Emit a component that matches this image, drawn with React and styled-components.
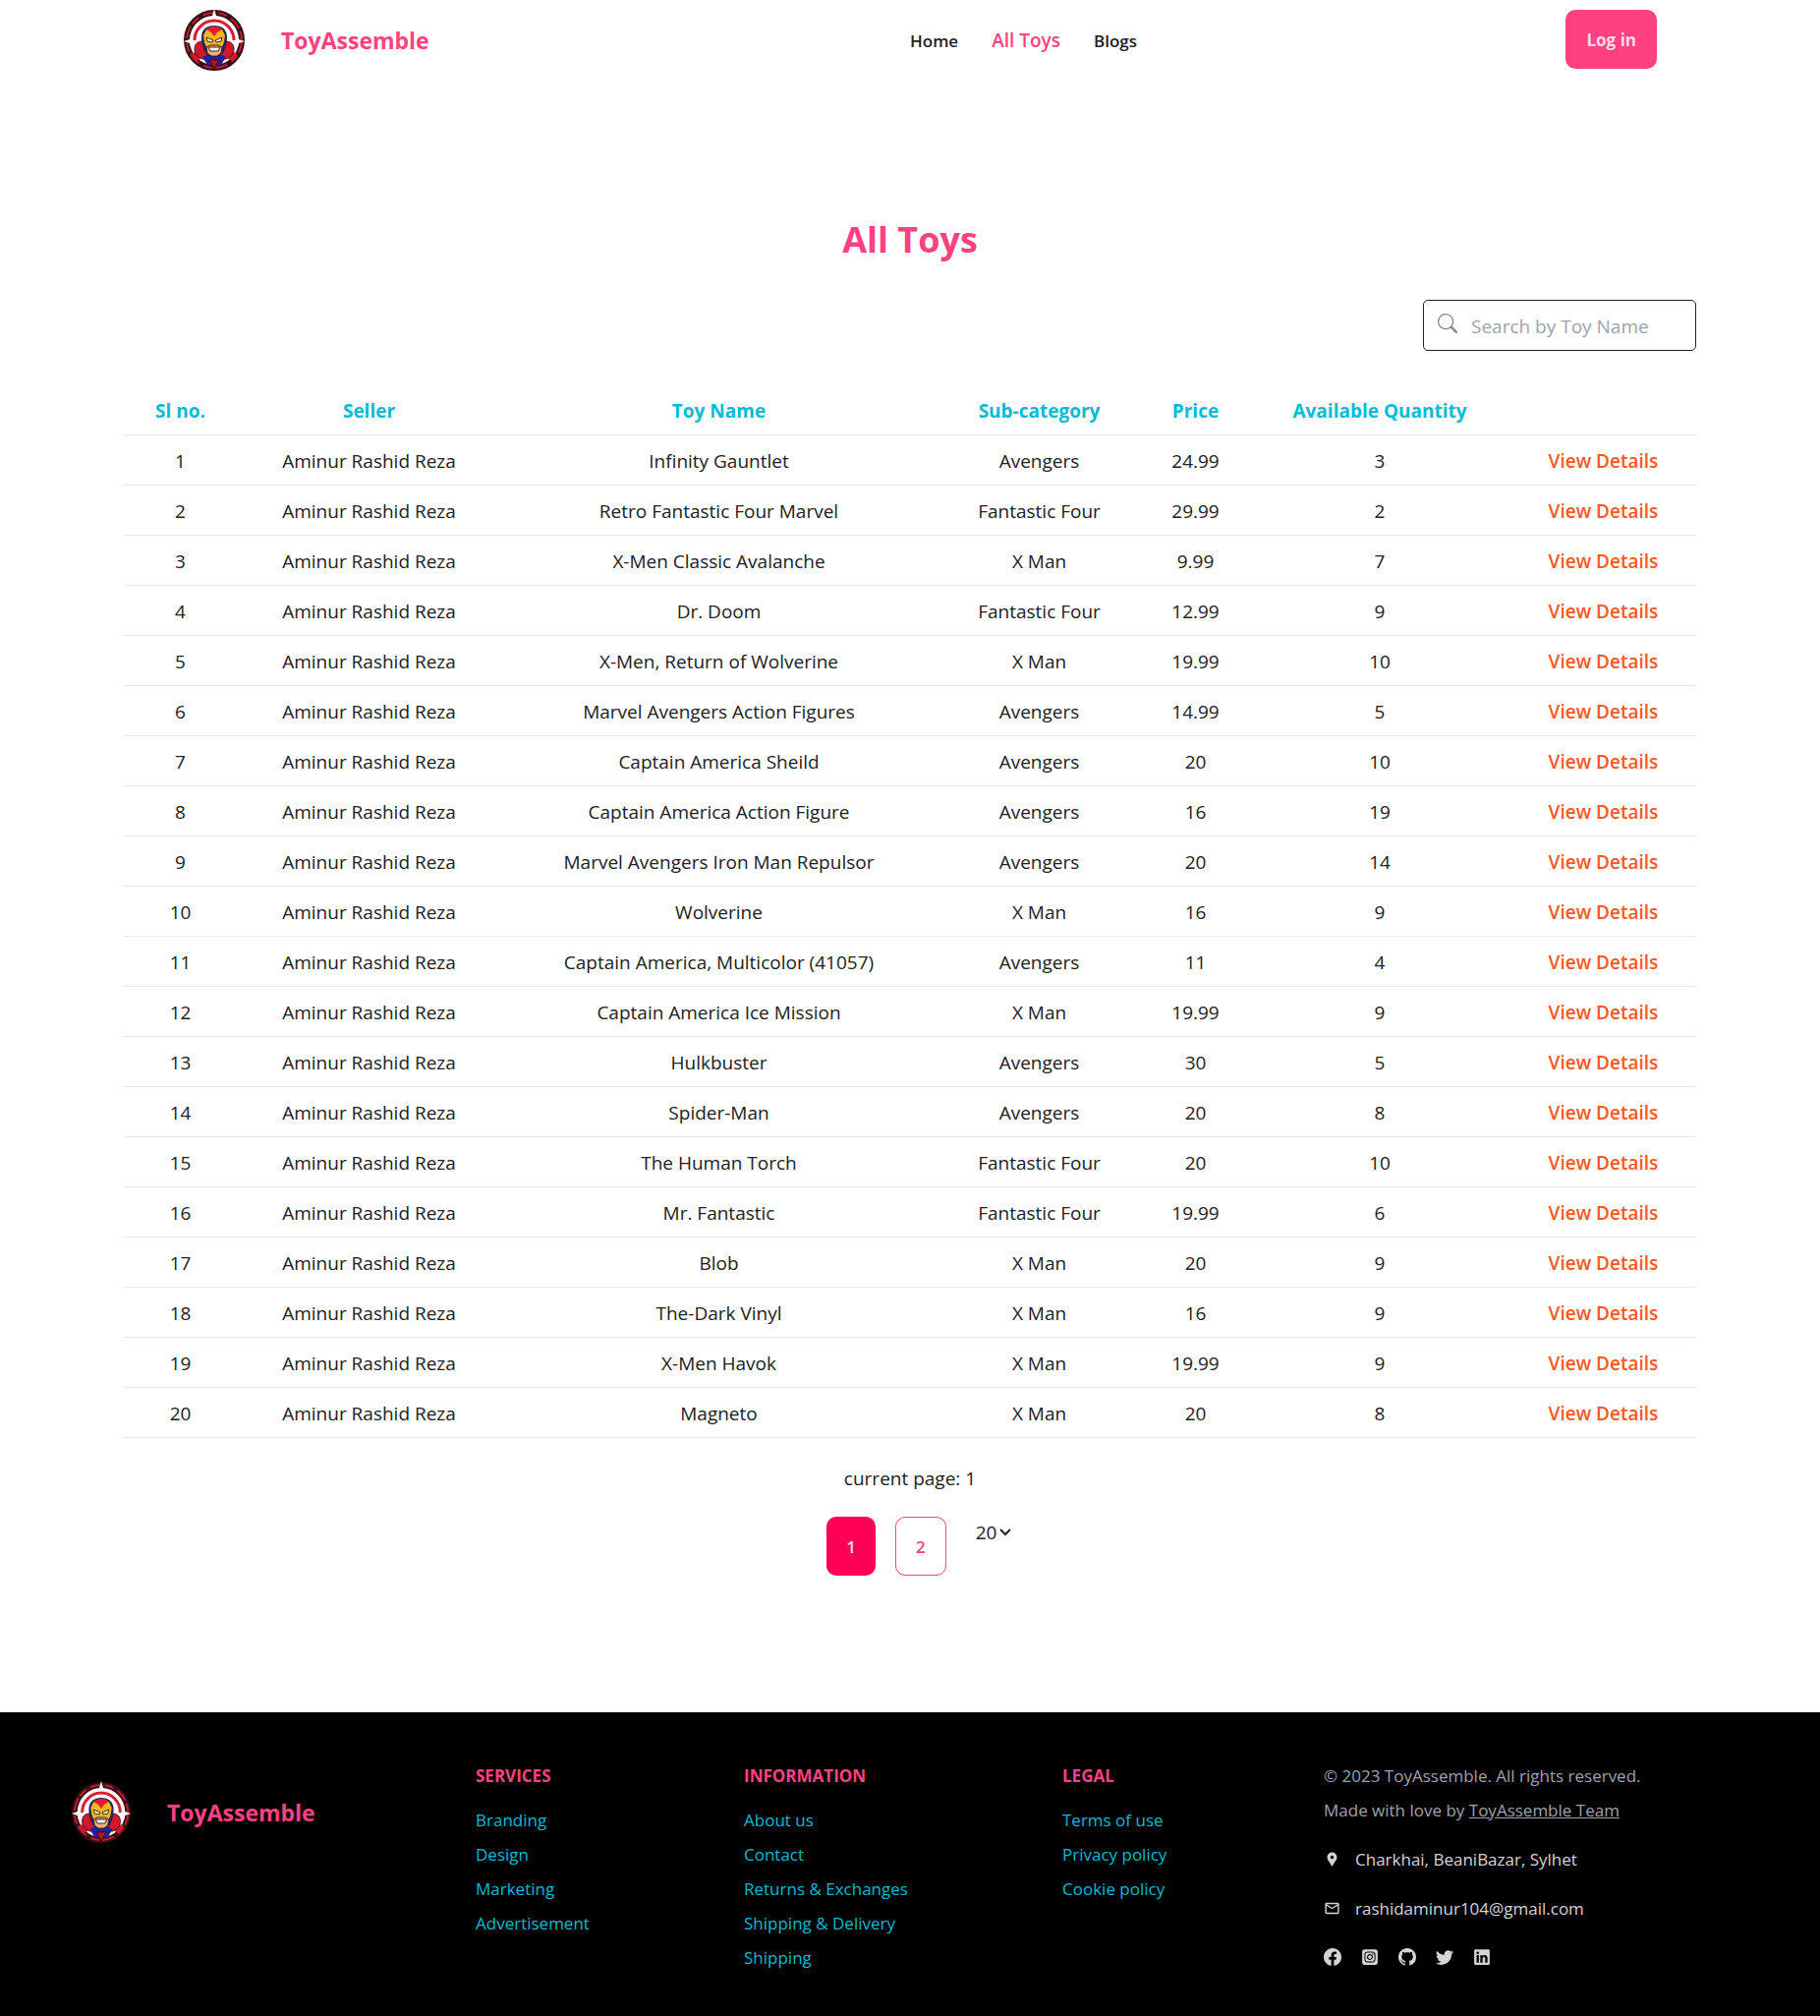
import React, { useState } from 'react';
import styled, { createGlobalStyle } from 'styled-components';
import { MdLocationPin, MdMailOutline } from 'react-icons/md';
import { BsSearch, BsFacebook, BsGithub, BsTwitter } from 'react-icons/bs';
import { FaLinkedin } from 'react-icons/fa';
import { FaSquareInstagram } from 'react-icons/fa6';

const Global = createGlobalStyle`
  *, *::before, *::after { box-sizing: border-box; }
  body {
    margin: 0;
    background: #fff;
    color: #212121;
    font-family: 'Segoe UI', 'Open Sans', 'Noto Sans', sans-serif;
    font-size: 19px;
    line-height: 30px;
  }
  a { color: inherit; text-decoration: none; }
  button, input, select { font: inherit; color: inherit; }
  ul { list-style: none; margin: 0; padding: 0; }
  h1, h2, p { margin: 0; }
`;

const pink = '#ff4081';
const cyan = '#00bcd4';

const Header = styled.header`
  display: grid;
  grid-template-columns: 1fr 1fr;
  align-items: center;
  height: 80px;
  padding: 0 166px;
`;
const Brand = styled.a`
  display: flex;
  align-items: center;
  gap: 36px;
  color: ${pink};
  font-size: 23px;
  font-weight: 700;
  line-height: 32px;
`;
const BrandName = styled.span`
  padding-top: 2px;
`;
const HeaderStart = styled.div`
  padding-left: 20px;
`;
const HeaderEnd = styled.div`
  display: flex;
  align-items: center;
  justify-content: space-between;
`;
const LogoSvg = styled.svg`
  display: block;
  width: ${(p) => p.$width}px;
  height: 64px;
`;
const Menu = styled.ul`
  display: flex;
  align-items: center;
  gap: 34px;
  padding-top: 2px;
`;
const MenuLink = styled.a`
  font-weight: 600;
  font-size: ${(p) => (p.$active ? 19 : 17)}px;
  color: ${(p) => (p.$active ? pink : 'inherit')};
`;
const Button = styled.button`
  display: inline-flex;
  align-items: center;
  justify-content: center;
  height: 60px;
  padding: 2px ${(p) => (p.$bold ? 21 : 20)}px 0;
  border: ${(p) => (p.$outline ? `1px solid ${pink}` : '0')};
  border-radius: 10px;
  background: ${(p) => p.$fill || 'transparent'};
  color: ${(p) => (p.$outline ? pink : '#ffd9e6')};
  font-size: 17px;
  font-weight: ${(p) => (p.$bold ? 700 : 600)};
  cursor: pointer;
`;

const Main = styled.main`
  padding: 138px 126px 139px;
`;
const Title = styled.h1`
  color: ${pink};
  font-size: 36px;
  font-weight: 700;
  line-height: 52px;
  text-align: center;
`;
const SearchRow = styled.div`
  display: flex;
  justify-content: flex-end;
  margin: 35px 0 34px;
`;
const SearchBox = styled.label`
  display: flex;
  align-items: center;
  gap: 14px;
  width: 278px;
  height: 52px;
  padding: 0 14px;
  border: 1px solid #212121;
  border-radius: 5px;
  svg { flex: none; color: #8a8a8a; width: 20px; height: 20px; margin-bottom: 4px; }
`;
const SearchInput = styled.input`
  flex: 1;
  min-width: 0;
  border: 0;
  padding: 2px 0 0;
  outline: 0;
  background: none;
  &::placeholder { color: #9ca3af; opacity: 1; }
`;

const Table = styled.table`
  width: 100%;
  table-layout: fixed;
  border-collapse: collapse;
  text-align: center;
`;
const Th = styled.th`
  height: 51px;
  padding: 4px 0 0;
  border-bottom: 1px solid #e5e7eb;
  color: ${cyan};
  font-weight: 700;
  white-space: nowrap;
`;
const Td = styled.td`
  height: 51px;
  padding: 2px 0 0;
  border-bottom: 1px solid #e5e7eb;
`;
const Details = styled.a`
  color: #ff5722;
  font-weight: 600;
`;

const Current = styled.p`
  margin-top: 26px;
  text-align: center;
`;
const Pager = styled.nav`
  display: flex;
  justify-content: center;
  gap: 20px;
  margin-top: 24px;
  padding-left: 20px;
`;
const SelectWrap = styled.label`
  display: flex;
  align-items: center;
  align-self: flex-start;
  margin-left: 10px;
  height: 32px;
`;
const Select = styled.select`
  appearance: none;
  border: 0;
  padding: 0;
  background: none;
`;
const Chevron = styled.svg`
  width: 16px;
  height: 16px;
  pointer-events: none;
`;

const Footer = styled.footer`
  display: grid;
  grid-template-columns: 412px 273px 324px 266px 1fr;
  min-height: 309px;
  padding: 47px 72px 42px;
  background: #000;
  color: ${cyan};
  font-size: 17px;
  line-height: 35px;
`;
const FooterBrand = styled.div`
  padding-top: 22px;
`;
const FooterTitle = styled.h2`
  margin-bottom: 10px;
  color: ${pink};
  font-size: 17px;
  font-weight: 700;
  line-height: 35px;
`;
const Contact = styled.address`
  color: #9ca3af;
  font-style: normal;
`;
const TeamLink = styled.a`
  text-decoration: underline;
`;
const ContactLine = styled.p`
  display: flex;
  align-items: center;
  gap: 15px;
  margin-top: 15px;
  color: #d4d4d4;
  svg { flex: none; width: 17px; height: 17px; }
`;
const Socials = styled.div`
  display: flex;
  align-items: center;
  gap: 20px;
  height: 35px;
  margin-top: 15px;
  color: #d4d4d4;
  a { display: flex; }
`;

const toys = [
  ['Infinity Gauntlet', 'Avengers', '24.99', 3],
  ['Retro Fantastic Four Marvel', 'Fantastic Four', '29.99', 2],
  ['X-Men Classic Avalanche', 'X Man', '9.99', 7],
  ['Dr. Doom', 'Fantastic Four', '12.99', 9],
  ['X-Men, Return of Wolverine', 'X Man', '19.99', 10],
  ['Marvel Avengers Action Figures', 'Avengers', '14.99', 5],
  ['Captain America Sheild', 'Avengers', '20', 10],
  ['Captain America Action Figure', 'Avengers', '16', 19],
  ['Marvel Avengers Iron Man Repulsor', 'Avengers', '20', 14],
  ['Wolverine', 'X Man', '16', 9],
  ['Captain America, Multicolor (41057)', 'Avengers', '11', 4],
  ['Captain America Ice Mission', 'X Man', '19.99', 9],
  ['Hulkbuster', 'Avengers', '30', 5],
  ['Spider-Man', 'Avengers', '20', 8],
  ['The Human Torch', 'Fantastic Four', '20', 10],
  ['Mr. Fantastic', 'Fantastic Four', '19.99', 6],
  ['Blob', 'X Man', '20', 9],
  ['The-Dark Vinyl', 'X Man', '16', 9],
  ['X-Men Havok', 'X Man', '19.99', 9],
  ['Magneto', 'X Man', '20', 8],
];
const columns = [
  ['Sl no.', 115],
  ['Seller', 269],
  ['Toy Name', 443],
  ['Sub-category', 209],
  ['Price', 109],
  ['Available Quantity', 266],
  ['', 189],
];
const footerGroups = [
  ['SERVICES', ['Branding', 'Design', 'Marketing', 'Advertisement']],
  ['INFORMATION', ['About us', 'Contact', 'Returns & Exchanges', 'Shipping & Delivery', 'Shipping']],
  ['LEGAL', ['Terms of use', 'Privacy policy', 'Cookie policy']],
];
const socials = [
  ['Facebook', BsFacebook],
  ['Instagram', FaSquareInstagram],
  ['GitHub', BsGithub],
  ['Twitter', BsTwitter],
  ['LinkedIn', FaLinkedin],
];

function Logo({ width = 64 }) {
  return (
    <LogoSvg $width={width} viewBox="0 0 64 64" preserveAspectRatio="none" aria-hidden="true">
      <circle cx="32" cy="33" r="26" fill="#fff" />
      <circle cx="32" cy="33" r="28" fill="none" stroke="#351015" strokeWidth="6" />
      <circle cx="32" cy="33" r="28" fill="none" stroke="#c41c2c" strokeWidth="2" strokeDasharray="13 3 9 5" />
      <path d="M32 1l2 7 5 3-7 2-7-2 5-3zM1 34l6-2 1-4 3 6-3 6-1-4zM63 34l-6-2-1-4-3 6 3 6 1-4z" fill="#fff" />
      <path d="M12 33a20 20 0 0 1 40 0" fill="none" stroke="#d81f30" strokeWidth="3" />
      <path d="M8 46l6-1 4 7-5 2zM56 46l-6-1-4 7 5 2z" fill="#d5172b" />
      <path d="M12 42c0-6 4-8 9-8h22c5 0 9 2 9 8 0 5-3 8-8 10H20c-5-2-8-5-8-10z" fill="#d5172b" stroke="#3a1230" strokeWidth="1" />
      <path d="M20 50l6-3h12l6 3-5 8H25z" fill="#2320a0" />
      <path d="M27 53h10l-5 9z" fill="#b51625" stroke="#351015" />
      <path d="M19 30c0-8 5-12 13-12s13 4 13 12c0 7-2 13-5 17l-5 3h-6l-5-3c-3-4-5-10-5-17z" fill="#25245d" />
      <path d="M21 28l3-6 8 2 8-2 3 6-1 7-3 7H25l-3-7z" fill="#f2b61a" />
      <path d="M24 22c2-2 4-3 8-3s6 1 8 3l-5 3-3 4-3-4z" fill="#e51c2b" />
      <path d="M24 30l7 3-1 2-5-1zM40 30l-7 3 1 2 5-1z" fill="#fff" stroke="#3b2515" strokeWidth="1" />
      <path d="M24 40l4-2h8l4 2-1 6-4 3h-6l-4-3z" fill="#efae7c" stroke="#3b2515" strokeWidth="1" />
      <path d="M26 40h12l-2 4h-8z" fill="#fff" stroke="#3b2515" strokeWidth="1" />
    </LogoSvg>
  );
}

export default function App() {
  const [page, setPage] = useState(1);
  const [size, setSize] = useState('20');
  return (
    <>
      <Global />
      <Header>
        <HeaderStart>
          <Brand href="#home"><Logo /><BrandName>ToyAssemble</BrandName></Brand>
        </HeaderStart>
        <HeaderEnd>
          <nav>
            <Menu>
              <li><MenuLink href="#home">Home</MenuLink></li>
              <li><MenuLink href="#toys" $active>All Toys</MenuLink></li>
              <li><MenuLink href="#blogs">Blogs</MenuLink></li>
            </Menu>
          </nav>
          <Button type="button" $fill={pink} $bold>Log in</Button>
        </HeaderEnd>
      </Header>
      <Main>
        <Title>All Toys</Title>
        <SearchRow>
          <SearchBox>
            <BsSearch aria-hidden="true" />
            <SearchInput type="text" aria-label="Search by Toy Name" placeholder="Search by Toy Name" />
          </SearchBox>
        </SearchRow>
        <Table>
          <colgroup>
            {columns.map(([name, width]) => <col key={name} width={width} />)}
          </colgroup>
          <thead>
            <tr>{columns.map(([name]) => <Th key={name} scope="col">{name}</Th>)}</tr>
          </thead>
          <tbody>
            {toys.map(([name, category, price, quantity], i) => (
              <tr key={name}>
                <Td>{i + 1}</Td>
                <Td>Aminur Rashid Reza</Td>
                <Td>{name}</Td>
                <Td>{category}</Td>
                <Td>{price}</Td>
                <Td>{quantity}</Td>
                <Td><Details href="#details">View Details</Details></Td>
              </tr>
            ))}
          </tbody>
        </Table>
        <Current>current page: {page}</Current>
        <Pager aria-label="Pages">
          {[1, 2].map((n) => (
            <Button
              key={n}
              type="button"
              $fill={n === page ? '#ff0057' : ''}
              $outline={n !== page}
              onClick={() => setPage(n)}
            >
              {n}
            </Button>
          ))}
          <SelectWrap>
            <Select aria-label="Toys per page" value={size} onChange={(e) => setSize(e.target.value)}>
              <option>5</option>
              <option>10</option>
              <option>20</option>
            </Select>
            <Chevron viewBox="0 0 16 16" aria-hidden="true">
              <path d="M3 5l5 5 5-5" fill="none" stroke="#212121" strokeWidth="2" />
            </Chevron>
          </SelectWrap>
        </Pager>
      </Main>
      <Footer>
        <FooterBrand>
          <Brand href="#home"><Logo width={62} /><BrandName>ToyAssemble</BrandName></Brand>
        </FooterBrand>
        {footerGroups.map(([title, links]) => (
          <div key={title}>
            <FooterTitle>{title}</FooterTitle>
            <ul>{links.map((link) => <li key={link}><a href="#footer">{link}</a></li>)}</ul>
          </div>
        ))}
        <Contact>
          <p>© 2023 ToyAssemble. All rights reserved.</p>
          <p>Made with love by <TeamLink href="#team">ToyAssemble Team</TeamLink></p>
          <ContactLine><MdLocationPin aria-hidden="true" />Charkhai, BeaniBazar, Sylhet</ContactLine>
          <ContactLine><MdMailOutline aria-hidden="true" />rashidaminur104@gmail.com</ContactLine>
          <Socials>
            {socials.map(([name, Icon]) => (
              <a key={name} href="#social" aria-label={name}><Icon size={18} /></a>
            ))}
          </Socials>
        </Contact>
      </Footer>
    </>
  );
}
